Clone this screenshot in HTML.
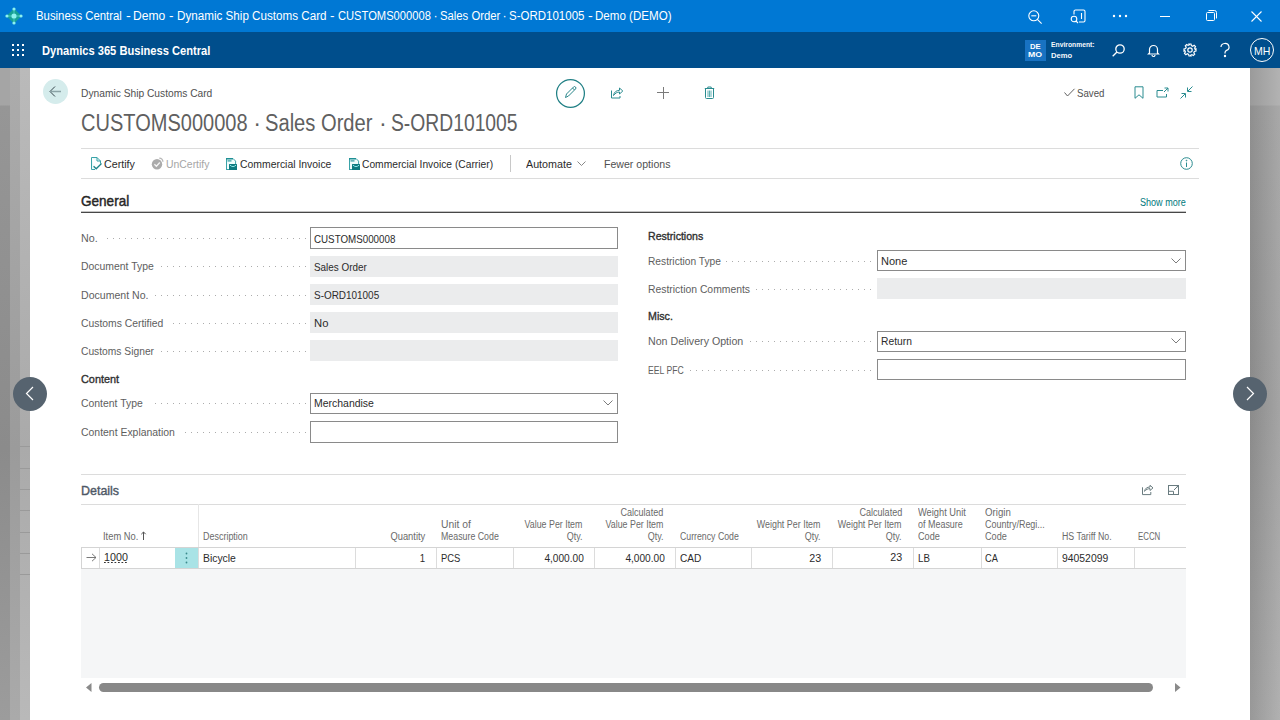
<!DOCTYPE html>
<html><head><meta charset="utf-8">
<style>
*{box-sizing:border-box;margin:0;padding:0}
html,body{width:1280px;height:720px;overflow:hidden;background:#fff;font-family:"Liberation Sans",sans-serif;color:#212121}
.a{position:absolute}
.t{position:absolute;white-space:nowrap}
svg{position:absolute;overflow:visible}
#title{left:0;top:0;width:1280px;height:32px;background:#0078d4}
#nav{left:0;top:32px;width:1280px;height:36px;background:#004e8c}
#lg1{left:0;top:68px;width:10px;height:652px;background:linear-gradient(180deg,#a5a5a5 0,#a5a5a5 37px,#969696 38px,#8b8b8b 380px,#9c9c9c 652px)}
#lg2{left:10px;top:68px;width:10px;height:652px;background:linear-gradient(180deg,#acacac 0,#9b9b9b 380px,#aaaaaa 652px)}
#lg3{left:20px;top:68px;width:10px;height:652px;background:linear-gradient(180deg,#bababa 0,#aaaaaa 380px,#b9b9b9 652px)}
#rg{left:1250px;top:68px;width:30px;height:652px;background:linear-gradient(90deg,rgba(0,0,0,0.06),rgba(255,255,255,0.16)),linear-gradient(180deg,#a4a4a4 0,#a4a4a4 37px,#989898 38px,#939393 340px,#a2a2a2 652px)}
.hl{position:absolute;height:1px;background:#dcdcdc}
.vl{position:absolute;width:1px;background:#dcdcdc}
.box{position:absolute;left:310px;width:308px;height:21px;border:1px solid #8a8a8a;background:#fff}
.box.r{left:877px;width:309px}
.dis{position:absolute;left:310px;width:308px;height:21px;background:#ebeced}
.dis.r{left:877px;width:309px}
.dots{position:absolute;height:1px;background-image:linear-gradient(90deg,transparent 5px,#acacac 5px);background-size:6px 1px;background-position:right 0 top 0}
</style></head><body>
<div id="title" class="a"></div>
<div id="nav" class="a"></div>
<div id="lg1" class="a"></div><div id="lg2" class="a"></div><div id="lg3" class="a"></div>
<div id="rg" class="a"></div>
<div class="a" style="left:20px;top:446px;width:10px;height:1px;background:#9a9a9a"></div><div class="a" style="left:20px;top:468px;width:10px;height:1px;background:#9a9a9a"></div><div class="a" style="left:20px;top:489px;width:10px;height:1px;background:#9a9a9a"></div><div class="a" style="left:20px;top:510px;width:10px;height:1px;background:#9a9a9a"></div><div class="a" style="left:20px;top:532px;width:10px;height:1px;background:#9a9a9a"></div><div class="a" style="left:20px;top:553px;width:10px;height:1px;background:#9a9a9a"></div><div class="a" style="left:20px;top:574px;width:10px;height:1px;background:#9a9a9a"></div>
<div class="a" style="left:30px;top:68px;width:1220px;height:652px;background:#fff"></div>

<!-- title bar icons -->
<svg style="left:5px;top:7px" width="18" height="18" viewBox="0 0 18 18">
  <path d="M9 2.5L15.5 9 9 15.5 2.5 9z" fill="#17a195" stroke="#17a195" stroke-width="1.5" stroke-linejoin="round"/>
  <circle cx="9" cy="9" r="2.6" fill="#8df2ee"/>
  <circle cx="9" cy="2" r="1.6" fill="#8df2ee"/><circle cx="9" cy="16" r="1.6" fill="#8df2ee"/>
  <circle cx="2" cy="9" r="1.6" fill="#8df2ee"/><circle cx="16" cy="9" r="1.6" fill="#8df2ee"/>
  <path d="M9 3.5V6.5M9 11.5V14.5M3.5 9H6.5M11.5 9H14.5" stroke="#8df2ee" stroke-width="0.8" opacity="0.6"/>
</svg>
<svg style="left:1028px;top:10px" width="15" height="14" viewBox="0 0 15 14" fill="none" stroke="#fff" stroke-width="1.1">
  <circle cx="5.8" cy="5.8" r="5"/><line x1="3.3" y1="5.8" x2="8.3" y2="5.8"/><line x1="9.4" y1="9.4" x2="13.6" y2="13.6"/>
</svg>
<svg style="left:1070px;top:9px" width="16" height="15" viewBox="0 0 16 15" fill="none" stroke="#fff" stroke-width="1.1">
  <path d="M4 5.5V2.5a1.5 1.5 0 0 1 1.5-1.5h8a1.5 1.5 0 0 1 1.5 1.5v9a1.5 1.5 0 0 1-1.5 1.5H9"/>
  <line x1="11.5" y1="4" x2="11.5" y2="10"/>
  <circle cx="4" cy="10" r="2.8"/><line x1="6" y1="12" x2="8" y2="14"/>
</svg>
<svg style="left:1112px;top:14px" width="16" height="4" viewBox="0 0 16 4" fill="#fff">
  <circle cx="2" cy="2" r="1.2"/><circle cx="8" cy="2" r="1.2"/><circle cx="14" cy="2" r="1.2"/>
</svg>
<div class="a" style="left:1160px;top:16px;width:10px;height:1px;background:#fff"></div>
<svg style="left:1206px;top:10px" width="11" height="11" viewBox="0 0 11 11" fill="none" stroke="#fff" stroke-width="1">
  <rect x="0.5" y="2.5" width="8" height="8" rx="1"/><path d="M2.5 0.5h6a2 2 0 0 1 2 2v6"/>
</svg>
<svg style="left:1251px;top:11px" width="11" height="11" viewBox="0 0 11 11" fill="none" stroke="#fff" stroke-width="1.1">
  <line x1="0.5" y1="0.5" x2="10.5" y2="10.5"/><line x1="10.5" y1="0.5" x2="0.5" y2="10.5"/>
</svg>

<!-- nav icons -->
<svg style="left:12px;top:44px" width="12" height="12" viewBox="0 0 12 12" fill="#fff">
  <rect x="0" y="0" width="2" height="2"/><rect x="5" y="0" width="2" height="2"/><rect x="10" y="0" width="2" height="2"/>
  <rect x="0" y="5" width="2" height="2"/><rect x="5" y="5" width="2" height="2"/><rect x="10" y="5" width="2" height="2"/>
  <rect x="0" y="10" width="2" height="2"/><rect x="5" y="10" width="2" height="2"/><rect x="10" y="10" width="2" height="2"/>
</svg>
<div class="a" style="left:1025px;top:40px;width:21px;height:21px;background:#1872c2"></div>
<svg style="left:1112px;top:44px" width="13" height="13" viewBox="0 0 13 13" fill="none" stroke="#fff" stroke-width="1.3">
  <circle cx="8" cy="5" r="4.2"/><line x1="5" y1="8" x2="0.7" y2="12.3"/>
</svg>
<svg style="left:1148px;top:44px" width="11" height="12" viewBox="0 0 11 12" fill="none" stroke="#fff" stroke-width="1.2">
  <path d="M1.5 9V5.5a4 4 0 0 1 8 0V9l1 1H0.5z"/><path d="M4 11a1.5 1.5 0 0 0 3 0"/>
</svg>
<svg style="left:1183px;top:43px" width="14" height="14" viewBox="0 0 14 14" fill="none" stroke="#fff" stroke-width="1.2">
  <circle cx="7" cy="7" r="2.2"/>
  <path d="M6 1h2l.4 1.6 1.3.6 1.4-.9 1.4 1.4-.9 1.4.6 1.3L13 6v2l-1.6.4-.6 1.3.9 1.4-1.4 1.4-1.4-.9-1.3.6L8 13H6l-.4-1.6-1.3-.6-1.4.9-1.4-1.4.9-1.4-.6-1.3L1 8V6l1.6-.4.6-1.3-.9-1.4 1.4-1.4 1.4.9 1.3-.6z"/>
</svg>
<svg style="left:1220px;top:43px" width="10" height="14" viewBox="0 0 10 14" fill="none" stroke="#fff" stroke-width="1.2">
  <path d="M1 4a4 3.6 0 1 1 5.5 3.4C5.3 8 5 8.6 5 9.8V10.5"/><circle cx="5" cy="13" r="0.6" fill="#fff"/>
</svg>
<div class="a" style="left:1250px;top:38px;width:24px;height:24px;border:1px solid #fff;border-radius:50%"></div>

<!-- card header -->
<div class="a" style="left:43px;top:79px;width:25px;height:25px;border-radius:50%;background:#d5ecec"></div>
<svg style="left:49px;top:85px" width="13" height="13" viewBox="0 0 13 13" fill="none" stroke="#34444a" stroke-width="1">
  <path d="M6 1.5L1 6.5L6 11.5"/><line x1="1" y1="6.5" x2="12" y2="6.5" stroke="#8aa3a6" stroke-width="1.5"/>
</svg>
<svg style="left:555px;top:78px" width="31" height="31" viewBox="0 0 31 31"><circle cx="15.5" cy="15.4" r="13.9" fill="none" stroke="#1f7f84" stroke-width="1.25"/></svg>
<svg style="left:563px;top:85px" width="15" height="15" viewBox="0 0 15 15" fill="none" stroke="#1f7f84" stroke-width="0.95">
  <path d="M2.5 12.5l1-3.5L10.5 2a1.4 1.4 0 0 1 2 2L5.5 11z"/><line x1="9.5" y1="3" x2="11.5" y2="5"/>
</svg>
<svg style="left:610px;top:86px" width="14" height="13" viewBox="0 0 14 13" fill="none" stroke="#2a8c90" stroke-width="1">
  <path d="M1.5 4.5v7.5h8.5V10"/><path d="M3.5 9.5C4 6 6.5 4.3 9.5 4.3V2l3.3 3-3.3 3V6C7.2 6 5.2 7.2 3.5 9.5z"/>
</svg>
<svg style="left:657px;top:87px" width="12" height="12" viewBox="0 0 12 12" stroke="#7a7a7a" stroke-width="1">
  <line x1="6.5" y1="0" x2="6.5" y2="12"/><line x1="0" y1="5.5" x2="12" y2="5.5"/>
</svg>
<svg style="left:704px;top:86px" width="11" height="13" viewBox="0 0 11 13" fill="none" stroke="#2a8c90" stroke-width="1">
  <path d="M1.5 2.5v9a1 1 0 0 0 1 1h6a1 1 0 0 0 1-1v-9"/><path d="M0.8 2.5h9.4"/><path d="M3.8 2.3V1h3.4v1.3"/><line x1="4" y1="4.5" x2="4" y2="11" stroke="#5fb0b3"/><line x1="5.5" y1="4.5" x2="5.5" y2="11" stroke="#5fb0b3"/><line x1="7" y1="4.5" x2="7" y2="11" stroke="#5fb0b3"/>
</svg>
<svg style="left:1064px;top:88px" width="11" height="9" viewBox="0 0 11 9" fill="none" stroke="#606060" stroke-width="1">
  <path d="M0.5 4.5L3.5 8L10.5 0.8"/>
</svg>
<svg style="left:1134px;top:86px" width="10" height="13" viewBox="0 0 10 13" fill="none" stroke="#2a8c90" stroke-width="1">
  <path d="M1 0.8h8v11.5L5 8.8 1 12.3z"/>
</svg>
<svg style="left:1156px;top:87px" width="13" height="11" viewBox="0 0 13 11" fill="none" stroke="#2a8c90" stroke-width="1">
  <path d="M7 3.5H1v6.5h9.5V7"/><path d="M8.5 1h3.5v3.5"/><line x1="12" y1="1" x2="8" y2="5"/>
</svg>
<svg style="left:1180px;top:86px" width="13" height="13" viewBox="0 0 13 13" fill="none" stroke="#2a8c90" stroke-width="1">
  <line x1="12.5" y1="0.5" x2="8" y2="5"/><path d="M7.5 1.5v4h4"/>
  <line x1="0.5" y1="12.5" x2="5" y2="8"/><path d="M1.5 7.5h4v4"/>
</svg>

<!-- action bar -->
<div class="hl" style="left:81px;top:148px;width:1118px"></div>
<div class="hl" style="left:81px;top:178px;width:1118px"></div>
<svg style="left:90px;top:157px" width="13" height="14" viewBox="0 0 13 14" fill="none">
  <path d="M1.5 0.5H7l3.5 3.5v2.5M5 12.5H1.5v-12" fill="#eefbfb" stroke="#3aa3a8" stroke-width="1"/><path d="M7 0.5v3.5h3.5" stroke="#3aa3a8" stroke-width="1"/>
  <path d="M3.6 9.2l2.6 2.6 5.3-5.3" stroke="#1c8489" stroke-width="1.3"/>
</svg>
<svg style="left:151px;top:157px" width="13" height="13" viewBox="0 0 13 13">
  <circle cx="6" cy="7.3" r="5.2" fill="#ababab"/><path d="M3.4 7.3l2 2 3.4-3.8" fill="none" stroke="#f4f4f4" stroke-width="1.3"/><path d="M8.3 1.2a3.8 3.8 0 0 1 3.6 3.6" fill="none" stroke="#b8b8b8" stroke-width="1.3"/>
</svg>
<svg style="left:226px;top:158px" width="12" height="12" viewBox="0 0 12 12">
  <path d="M0.5 11.5V0.5h6.5l2.6 2.6v3" fill="#effcfc" stroke="#3aa3a8" stroke-width="1"/>
  <rect x="0" y="0" width="7" height="1.5" fill="#1f8f94"/><rect x="1.5" y="2.3" width="4" height="1.2" fill="#2f9a9f"/><rect x="0" y="11" width="3" height="1" fill="#3aa3a8"/>
  <rect x="3" y="6" width="8" height="6" fill="#0e7a80"/><path d="M3.8 7Q7 10.2 10.2 7" fill="none" stroke="#8fe8ea" stroke-width="1"/>
</svg>
<svg style="left:349px;top:158px" width="12" height="12" viewBox="0 0 12 12">
  <path d="M0.5 11.5V0.5h6.5l2.6 2.6v3" fill="#effcfc" stroke="#3aa3a8" stroke-width="1"/>
  <rect x="0" y="0" width="7" height="1.5" fill="#1f8f94"/><rect x="1.5" y="2.3" width="4" height="1.2" fill="#2f9a9f"/><rect x="0" y="11" width="3" height="1" fill="#3aa3a8"/>
  <rect x="3" y="6" width="8" height="6" fill="#0e7a80"/><path d="M3.8 7Q7 10.2 10.2 7" fill="none" stroke="#8fe8ea" stroke-width="1"/>
</svg>
<div class="vl" style="left:510px;top:155px;height:17px;background:#c8c8c8"></div>
<svg style="left:577px;top:161px" width="9" height="5" viewBox="0 0 9 5" fill="none" stroke="#7a7a7a" stroke-width="0.9">
  <path d="M0.5 0.5l4 4 4-4"/>
</svg>
<svg style="left:1180px;top:157px" width="13" height="13" viewBox="0 0 13 13" fill="none" stroke="#2a8c90" stroke-width="1">
  <circle cx="6.5" cy="6.5" r="5.8"/><line x1="6.5" y1="5.5" x2="6.5" y2="10"/><circle cx="6.5" cy="3.6" r="0.4" fill="#2a8c90"/>
</svg>

<!-- General -->
<div class="a" style="left:81px;top:211px;width:1105px;height:1px;background:#c4c4c4"></div><div class="a" style="left:81px;top:212px;width:1105px;height:1px;background:#474747"></div>

<!-- leader dots -->
<div class="dots" style="left:104px;width:202px;top:238px"></div>
<div class="dots" style="left:158px;width:148px;top:266px"></div>
<div class="dots" style="left:152px;width:154px;top:295px"></div>
<div class="dots" style="left:168px;width:138px;top:323px"></div>
<div class="dots" style="left:158px;width:148px;top:351px"></div>
<div class="dots" style="left:152px;width:154px;top:403px"></div>
<div class="dots" style="left:180px;width:126px;top:432px"></div>
<div class="dots" style="left:726px;width:145px;top:261px"></div>
<div class="dots" style="left:754px;width:117px;top:289px"></div>
<div class="dots" style="left:748px;width:123px;top:341px"></div>
<div class="dots" style="left:688px;width:183px;top:370px"></div>

<!-- fields -->
<div class="box" style="top:227px;height:22px"></div>
<div class="dis" style="top:256px"></div>
<div class="dis" style="top:284px"></div>
<div class="dis" style="top:312px"></div>
<div class="dis" style="top:340px"></div>
<div class="box" style="top:393px"></div>
<div class="box" style="top:421px;height:22px"></div>
<div class="box r" style="top:250px"></div>
<div class="dis r" style="top:278px"></div>
<div class="box r" style="top:331px"></div>
<div class="box r" style="top:359px"></div>
<svg style="left:603px;top:400px" width="10" height="6" viewBox="0 0 10 6" fill="none" stroke="#7c7c7c" stroke-width="1"><path d="M0.5 0.5l4.5 4.5 4.5-4.5"/></svg>
<svg style="left:1171px;top:258px" width="10" height="6" viewBox="0 0 10 6" fill="none" stroke="#7c7c7c" stroke-width="1"><path d="M0.5 0.5l4.5 4.5 4.5-4.5"/></svg>
<svg style="left:1171px;top:338px" width="10" height="6" viewBox="0 0 10 6" fill="none" stroke="#7c7c7c" stroke-width="1"><path d="M0.5 0.5l4.5 4.5 4.5-4.5"/></svg>

<!-- Details -->
<div class="hl" style="left:81px;top:474px;width:1105px"></div>
<div class="hl" style="left:81px;top:504px;width:1105px"></div>
<svg style="left:1141px;top:484px" width="13" height="12" viewBox="0 0 13 12" fill="none" stroke="#6a7c80" stroke-width="1">
  <path d="M1.5 3.3v7.3h8.3V8"/><path d="M3.5 7.3C4 4.5 6 3 9 3V1.3l3 2.6-3 2.6V4.6C7 4.6 5 5.5 3.5 7.3z"/>
</svg>
<svg style="left:1168px;top:485px" width="11" height="10" viewBox="0 0 11 10" fill="none" stroke="#6a7c80" stroke-width="1">
  <rect x="0.5" y="0.5" width="10" height="9"/><path d="M0.5 6.3h5v3.2"/><path d="M6 5l4.3-4.3M7.8 0.7h2.5v2.5"/>
</svg>
<div class="vl" style="left:198px;top:504px;height:43px;background:#e6e6e6"></div>
<svg style="left:141px;top:531px" width="5" height="9" viewBox="0 0 5 9" fill="none" stroke="#555" stroke-width="1"><path d="M2.5 9V1M0.3 3.2L2.5 1l2.2 2.2"/></svg>

<!-- grid row -->
<div class="a" style="left:81px;top:547px;width:1105px;height:22px;border-top:1px solid #d4d4d4;border-bottom:1px solid #d4d4d4;border-left:1px solid #d4d4d4;background:#fff"></div>
<div class="a" style="left:175px;top:548px;width:23px;height:20px;background:#a9e3e6"></div>
<div class="vl" style="left:99px;top:548px;height:20px"></div>
<div class="vl" style="left:198px;top:548px;height:20px"></div>
<div class="vl" style="left:355px;top:548px;height:20px"></div>
<div class="vl" style="left:436px;top:548px;height:20px"></div>
<div class="vl" style="left:513px;top:548px;height:20px"></div>
<div class="vl" style="left:594px;top:548px;height:20px"></div>
<div class="vl" style="left:675px;top:548px;height:20px"></div>
<div class="vl" style="left:751px;top:548px;height:20px"></div>
<div class="vl" style="left:832px;top:548px;height:20px"></div>
<div class="vl" style="left:913px;top:548px;height:20px"></div>
<div class="vl" style="left:981px;top:548px;height:20px"></div>
<div class="vl" style="left:1057px;top:548px;height:20px"></div>
<div class="vl" style="left:1134px;top:548px;height:20px"></div>
<svg style="left:86px;top:553px" width="11" height="9" viewBox="0 0 11 9" fill="none" stroke="#6a6a6a" stroke-width="0.9"><path d="M0.5 4.5h9.5M6 0.8l4 3.7-4 3.7"/></svg>
<svg style="left:185px;top:551px" width="3" height="14" viewBox="0 0 3 14" fill="#3b8a8d"><circle cx="1.5" cy="2.5" r="0.9"/><circle cx="1.5" cy="7" r="0.9"/><circle cx="1.5" cy="11.5" r="0.9"/></svg>
<div class="a" style="left:104px;top:562px;width:23px;height:1px;background-image:linear-gradient(90deg,#333 2px,transparent 2px);background-size:3.5px 1px"></div>
<div class="a" style="left:81px;top:569px;width:1105px;height:109px;background:#f5f6f7"></div>

<!-- scrollbar -->
<svg style="left:86px;top:683px" width="6" height="9" viewBox="0 0 6 9" fill="#8a8a8a"><path d="M5.5 0v9L0 4.5z"/></svg>
<div class="a" style="left:99px;top:683px;width:54px;height:9px;border-radius:4.5px;background:#888888;width:1054px"></div>
<svg style="left:1175px;top:683px" width="6" height="9" viewBox="0 0 6 9" fill="#8a8a8a"><path d="M0 0v9L5.5 4.5z"/></svg>

<!-- side nav circles -->
<div class="a" style="left:13px;top:377px;width:34px;height:34px;border-radius:50%;background:#56636f"></div>
<svg style="left:25px;top:386px" width="9" height="15" viewBox="0 0 9 15" fill="none" stroke="#fff" stroke-width="1.2"><path d="M8 1L1.5 7.5 8 14"/></svg>
<div class="a" style="left:1233px;top:377px;width:34px;height:34px;border-radius:50%;background:#56636f"></div>
<svg style="left:1246px;top:386px" width="9" height="15" viewBox="0 0 9 15" fill="none" stroke="#fff" stroke-width="1.2"><path d="M1 1l6.5 6.5L1 14"/></svg>

<div class="t" style="left:36px;top:10.019px;font-size:12.5px;line-height:12.5px;color:#ffffff;transform:scaleX(0.908);transform-origin:left center;">Business Central</div>
<div class="t" style="left:125.5px;top:10.019px;font-size:12.5px;line-height:12.5px;color:#ffffff;transform:scaleX(1.153);transform-origin:left center;">-</div>
<div class="t" style="left:133.25px;top:10.019px;font-size:12.5px;line-height:12.5px;color:#ffffff;transform:scaleX(0.967);transform-origin:left center;">Demo</div>
<div class="t" style="left:169.3px;top:10.019px;font-size:12.5px;line-height:12.5px;color:#ffffff;transform:scaleX(1.081);transform-origin:left center;">-</div>
<div class="t" style="left:176.5px;top:10.019px;font-size:12.5px;line-height:12.5px;color:#ffffff;transform:scaleX(0.932);transform-origin:left center;">Dynamic Ship Customs Card</div>
<div class="t" style="left:330px;top:10.019px;font-size:12.5px;line-height:12.5px;color:#ffffff;transform:scaleX(1.081);transform-origin:left center;">-</div>
<div class="t" style="left:337.8px;top:10.019px;font-size:12.5px;line-height:12.5px;color:#ffffff;transform:scaleX(0.893);transform-origin:left center;">CUSTOMS000008</div>
<div class="t" style="left:433.5px;top:10.019px;font-size:12.5px;line-height:12.5px;color:#ffffff;">·</div>
<div class="t" style="left:439.7px;top:10.019px;font-size:12.5px;line-height:12.5px;color:#ffffff;transform:scaleX(0.904);transform-origin:left center;">Sales Order</div>
<div class="t" style="left:502.5px;top:10.019px;font-size:12.5px;line-height:12.5px;color:#ffffff;">·</div>
<div class="t" style="left:508.9px;top:10.019px;font-size:12.5px;line-height:12.5px;color:#ffffff;transform:scaleX(0.92);transform-origin:left center;">S-ORD101005</div>
<div class="t" style="left:588px;top:10.019px;font-size:12.5px;line-height:12.5px;color:#ffffff;transform:scaleX(1.153);transform-origin:left center;">-</div>
<div class="t" style="left:595.3px;top:10.019px;font-size:12.5px;line-height:12.5px;color:#ffffff;transform:scaleX(0.926);transform-origin:left center;">Demo (DEMO)</div>
<div class="t" style="left:42.2px;top:44.819px;font-size:12.5px;line-height:12.5px;color:#ffffff;font-weight:700;transform:scaleX(0.891);transform-origin:left center;">Dynamics 365 Business Central</div>
<div class="t" style="left:1051.28px;top:40.928px;font-size:8px;line-height:8px;color:#f4f8fc;font-weight:700;transform:scaleX(0.846);transform-origin:left center;">Environment:</div>
<div class="t" style="left:1051.28px;top:51.828px;font-size:8px;line-height:8px;color:#f4f8fc;font-weight:700;transform:scaleX(0.951);transform-origin:left center;">Demo</div>
<div class="t" style="left:1030.28px;top:43.128px;font-size:8px;line-height:8px;color:#ffffff;font-weight:700;transform:scaleX(0.957);transform-origin:left center;">DE</div>
<div class="t" style="left:1028.48px;top:51.128px;font-size:8px;line-height:8px;color:#ffffff;font-weight:700;transform:scaleX(1.089);transform-origin:left center;">MO</div>
<div class="t" style="left:1254.06px;top:45.889px;font-size:11px;line-height:11px;color:#ffffff;transform:scaleX(0.958);transform-origin:left center;">MH</div>
<div class="t" style="left:81.092px;top:88.966px;font-size:10.2px;line-height:10.2px;color:#505050;transform:scaleX(1.004);transform-origin:left center;">Dynamic Ship Customs Card</div>
<div class="t" style="left:81.16px;top:111.707px;font-size:23.5px;line-height:23.5px;color:#606060;transform:scaleX(0.852);transform-origin:left center;">CUSTOMS000008</div>
<div class="t" style="left:253.26px;top:111.707px;font-size:23.5px;line-height:23.5px;color:#606060;">·</div>
<div class="t" style="left:264.81px;top:111.707px;font-size:23.5px;line-height:23.5px;color:#606060;transform:scaleX(0.857);transform-origin:left center;">Sales Order</div>
<div class="t" style="left:379.06px;top:111.707px;font-size:23.5px;line-height:23.5px;color:#606060;">·</div>
<div class="t" style="left:390.86px;top:111.707px;font-size:23.5px;line-height:23.5px;color:#606060;transform:scaleX(0.821);transform-origin:left center;">S-ORD101005</div>
<div class="t" style="left:1077.06px;top:88.289px;font-size:11px;line-height:11px;color:#505050;transform:scaleX(0.878);transform-origin:left center;">Saved</div>
<div class="t" style="left:104.04px;top:159.065px;font-size:11.5px;line-height:11.5px;color:#2b2b2b;transform:scaleX(0.931);transform-origin:left center;">Certify</div>
<div class="t" style="left:165.74px;top:159.065px;font-size:11.5px;line-height:11.5px;color:#a6a6a6;transform:scaleX(0.906);transform-origin:left center;">UnCertify</div>
<div class="t" style="left:239.54px;top:159.065px;font-size:11.5px;line-height:11.5px;color:#2b2b2b;transform:scaleX(0.905);transform-origin:left center;">Commercial Invoice</div>
<div class="t" style="left:362.44px;top:159.065px;font-size:11.5px;line-height:11.5px;color:#2b2b2b;transform:scaleX(0.892);transform-origin:left center;">Commercial Invoice (Carrier)</div>
<div class="t" style="left:526.44px;top:159.065px;font-size:11.5px;line-height:11.5px;color:#2b2b2b;transform:scaleX(0.933);transform-origin:left center;">Automate</div>
<div class="t" style="left:603.74px;top:159.065px;font-size:11.5px;line-height:11.5px;color:#505050;transform:scaleX(0.92);transform-origin:left center;">Fewer options</div>
<div class="t" style="left:80.72px;top:194.226px;font-size:14.5px;line-height:14.5px;color:#262626;transform:scaleX(0.934);transform-origin:left center;-webkit-text-stroke:0.45px #262626;">General</div>
<div class="t" style="left:1140.1px;top:198.135px;font-size:10px;line-height:10px;color:#00797d;transform:scaleX(0.906);transform-origin:left center;">Show more</div>
<div class="t" style="left:81.16px;top:233.189px;font-size:11px;line-height:11px;color:#5e5e5e;transform:scaleX(0.974);transform-origin:left center;">No.</div>
<div class="t" style="left:81.16px;top:261.188px;font-size:11px;line-height:11px;color:#5e5e5e;transform:scaleX(0.947);transform-origin:left center;">Document Type</div>
<div class="t" style="left:81.16px;top:290.188px;font-size:11px;line-height:11px;color:#5e5e5e;transform:scaleX(0.96);transform-origin:left center;">Document No.</div>
<div class="t" style="left:81.16px;top:317.988px;font-size:11px;line-height:11px;color:#5e5e5e;transform:scaleX(0.941);transform-origin:left center;">Customs Certified</div>
<div class="t" style="left:81.16px;top:345.988px;font-size:11px;line-height:11px;color:#5e5e5e;transform:scaleX(0.933);transform-origin:left center;">Customs Signer</div>
<div class="t" style="left:81.16px;top:398.188px;font-size:11px;line-height:11px;color:#5e5e5e;transform:scaleX(0.947);transform-origin:left center;">Content Type</div>
<div class="t" style="left:81.16px;top:426.988px;font-size:11px;line-height:11px;color:#5e5e5e;transform:scaleX(0.948);transform-origin:left center;">Content Explanation</div>
<div class="t" style="left:81.16px;top:373.788px;font-size:11px;line-height:11px;color:#303030;transform:scaleX(0.988);transform-origin:left center;-webkit-text-stroke:0.35px #303030;">Content</div>
<div class="t" style="left:648.46px;top:256.089px;font-size:11px;line-height:11px;color:#5e5e5e;transform:scaleX(0.927);transform-origin:left center;">Restriction Type</div>
<div class="t" style="left:648.46px;top:284.088px;font-size:11px;line-height:11px;color:#5e5e5e;transform:scaleX(0.943);transform-origin:left center;">Restriction Comments</div>
<div class="t" style="left:648.46px;top:336.088px;font-size:11px;line-height:11px;color:#5e5e5e;transform:scaleX(0.968);transform-origin:left center;">Non Delivery Option</div>
<div class="t" style="left:648.46px;top:364.988px;font-size:11px;line-height:11px;color:#5e5e5e;transform:scaleX(0.785);transform-origin:left center;">EEL PFC</div>
<div class="t" style="left:648.46px;top:231.189px;font-size:11px;line-height:11px;color:#303030;transform:scaleX(0.962);transform-origin:left center;-webkit-text-stroke:0.35px #303030;">Restrictions</div>
<div class="t" style="left:648.46px;top:311.188px;font-size:11px;line-height:11px;color:#303030;transform:scaleX(0.969);transform-origin:left center;-webkit-text-stroke:0.35px #303030;">Misc.</div>
<div class="t" style="left:314.16px;top:233.988px;font-size:11px;line-height:11px;color:#2b2b2b;transform:scaleX(0.889);transform-origin:left center;">CUSTOMS000008</div>
<div class="t" style="left:314.16px;top:261.588px;font-size:11px;line-height:11px;color:#2b2b2b;transform:scaleX(0.898);transform-origin:left center;">Sales Order</div>
<div class="t" style="left:314.16px;top:290.188px;font-size:11px;line-height:11px;color:#2b2b2b;transform:scaleX(0.903);transform-origin:left center;">S-ORD101005</div>
<div class="t" style="left:314.16px;top:318.188px;font-size:11px;line-height:11px;color:#2b2b2b;transform:scaleX(1.023);transform-origin:left center;">No</div>
<div class="t" style="left:313.76px;top:398.188px;font-size:11px;line-height:11px;color:#2b2b2b;transform:scaleX(0.951);transform-origin:left center;">Merchandise</div>
<div class="t" style="left:880.56px;top:256.189px;font-size:11px;line-height:11px;color:#2b2b2b;transform:scaleX(1.003);transform-origin:left center;">None</div>
<div class="t" style="left:880.56px;top:336.188px;font-size:11px;line-height:11px;color:#2b2b2b;transform:scaleX(0.935);transform-origin:left center;">Return</div>
<div class="t" style="left:80.96px;top:483.772px;font-size:13.5px;line-height:13.5px;color:#4e5866;transform:scaleX(0.923);transform-origin:left center;-webkit-text-stroke:0.4px #4e5866;">Details</div>
<div class="t" style="left:103.1px;top:531.835px;font-size:10px;line-height:10px;color:#6a6a6a;transform:scaleX(0.934);transform-origin:left center;">Item No.</div>
<div class="t" style="left:202.6px;top:531.835px;font-size:10px;line-height:10px;color:#6a6a6a;transform:scaleX(0.896);transform-origin:left center;">Description</div>
<div class="t" style="left:387.659px;top:531.835px;font-size:10px;line-height:10px;color:#6a6a6a;transform:scaleX(0.934);transform-origin:right center;">Quantity</div>
<div class="t" style="left:441.1px;top:520.035px;font-size:10px;line-height:10px;color:#6a6a6a;transform:scaleX(1.031);transform-origin:left center;">Unit of</div>
<div class="t" style="left:441.1px;top:532.035px;font-size:10px;line-height:10px;color:#6a6a6a;transform:scaleX(0.881);transform-origin:left center;">Measure Code</div>
<div class="t" style="left:517px;top:520.035px;font-size:10px;line-height:10px;color:#6a6a6a;transform:scaleX(0.884);transform-origin:right center;">Value Per Item</div>
<div class="t" style="left:564.807px;top:532.035px;font-size:10px;line-height:10px;color:#6a6a6a;transform:scaleX(0.898);transform-origin:right center;">Qty.</div>
<div class="t" style="left:616.149px;top:508.135px;font-size:10px;line-height:10px;color:#6a6a6a;transform:scaleX(0.906);transform-origin:right center;">Calculated</div>
<div class="t" style="left:598px;top:520.035px;font-size:10px;line-height:10px;color:#6a6a6a;transform:scaleX(0.884);transform-origin:right center;">Value Per Item</div>
<div class="t" style="left:645.807px;top:532.035px;font-size:10px;line-height:10px;color:#6a6a6a;transform:scaleX(0.898);transform-origin:right center;">Qty.</div>
<div class="t" style="left:679.6px;top:532.035px;font-size:10px;line-height:10px;color:#6a6a6a;transform:scaleX(0.874);transform-origin:left center;">Currency Code</div>
<div class="t" style="left:749.491px;top:520.035px;font-size:10px;line-height:10px;color:#6a6a6a;transform:scaleX(0.892);transform-origin:right center;">Weight Per Item</div>
<div class="t" style="left:803.407px;top:532.035px;font-size:10px;line-height:10px;color:#6a6a6a;transform:scaleX(0.898);transform-origin:right center;">Qty.</div>
<div class="t" style="left:854.749px;top:508.135px;font-size:10px;line-height:10px;color:#6a6a6a;transform:scaleX(0.906);transform-origin:right center;">Calculated</div>
<div class="t" style="left:830.491px;top:520.035px;font-size:10px;line-height:10px;color:#6a6a6a;transform:scaleX(0.892);transform-origin:right center;">Weight Per Item</div>
<div class="t" style="left:884.407px;top:532.035px;font-size:10px;line-height:10px;color:#6a6a6a;transform:scaleX(0.898);transform-origin:right center;">Qty.</div>
<div class="t" style="left:917.9px;top:508.135px;font-size:10px;line-height:10px;color:#6a6a6a;transform:scaleX(0.928);transform-origin:left center;">Weight Unit</div>
<div class="t" style="left:917.9px;top:520.035px;font-size:10px;line-height:10px;color:#6a6a6a;transform:scaleX(0.896);transform-origin:left center;">of Measure</div>
<div class="t" style="left:917.9px;top:532.035px;font-size:10px;line-height:10px;color:#6a6a6a;transform:scaleX(0.912);transform-origin:left center;">Code</div>
<div class="t" style="left:985.1px;top:508.135px;font-size:10px;line-height:10px;color:#6a6a6a;transform:scaleX(0.967);transform-origin:left center;">Origin</div>
<div class="t" style="left:985.1px;top:520.035px;font-size:10px;line-height:10px;color:#6a6a6a;transform:scaleX(0.897);transform-origin:left center;">Country/Regi...</div>
<div class="t" style="left:985.1px;top:532.035px;font-size:10px;line-height:10px;color:#6a6a6a;transform:scaleX(0.912);transform-origin:left center;">Code</div>
<div class="t" style="left:1062.4px;top:532.035px;font-size:10px;line-height:10px;color:#6a6a6a;transform:scaleX(0.881);transform-origin:left center;">HS Tariff No.</div>
<div class="t" style="left:1138.1px;top:532.035px;font-size:10px;line-height:10px;color:#6a6a6a;transform:scaleX(0.787);transform-origin:left center;">ECCN</div>
<div class="t" style="left:104.06px;top:551.688px;font-size:11px;line-height:11px;color:#2b2b2b;transform:scaleX(0.976);transform-origin:left center;">1000</div>
<div class="t" style="left:203.36px;top:553.188px;font-size:11px;line-height:11px;color:#2b2b2b;transform:scaleX(0.944);transform-origin:left center;">Bicycle</div>
<div class="t" style="left:418.822px;top:553.188px;font-size:11px;line-height:11px;color:#2b2b2b;transform:scaleX(0.879);transform-origin:right center;">1</div>
<div class="t" style="left:441.06px;top:553.188px;font-size:11px;line-height:11px;color:#2b2b2b;transform:scaleX(0.857);transform-origin:left center;">PCS</div>
<div class="t" style="left:540.622px;top:553.188px;font-size:11px;line-height:11px;color:#2b2b2b;transform:scaleX(0.92);transform-origin:right center;">4,000.00</div>
<div class="t" style="left:621.622px;top:552.588px;font-size:11px;line-height:11px;color:#2b2b2b;transform:scaleX(0.92);transform-origin:right center;">4,000.00</div>
<div class="t" style="left:679.86px;top:553.188px;font-size:11px;line-height:11px;color:#2b2b2b;transform:scaleX(0.921);transform-origin:left center;">CAD</div>
<div class="t" style="left:809.205px;top:553.188px;font-size:11px;line-height:11px;color:#2b2b2b;transform:scaleX(0.971);transform-origin:right center;">23</div>
<div class="t" style="left:890.205px;top:552.389px;font-size:11px;line-height:11px;color:#2b2b2b;transform:scaleX(0.971);transform-origin:right center;">23</div>
<div class="t" style="left:918.06px;top:553.188px;font-size:11px;line-height:11px;color:#2b2b2b;transform:scaleX(0.883);transform-origin:left center;">LB</div>
<div class="t" style="left:985.36px;top:553.188px;font-size:11px;line-height:11px;color:#2b2b2b;transform:scaleX(0.843);transform-origin:left center;">CA</div>
<div class="t" style="left:1062.36px;top:553.188px;font-size:11px;line-height:11px;color:#2b2b2b;transform:scaleX(0.944);transform-origin:left center;">94052099</div>
</body></html>
